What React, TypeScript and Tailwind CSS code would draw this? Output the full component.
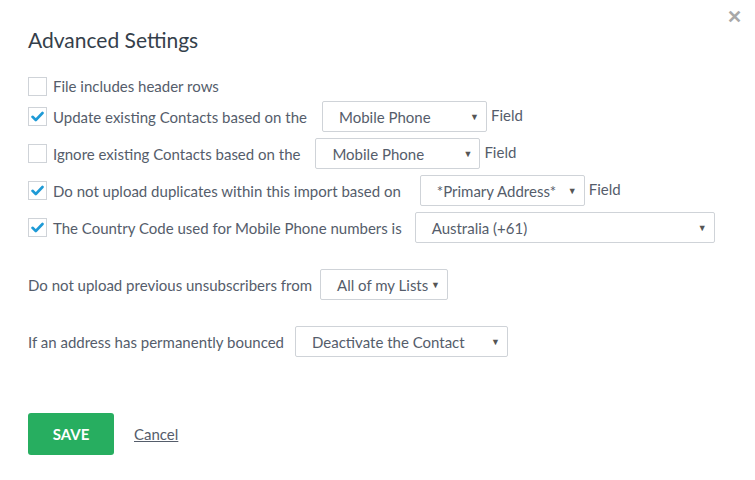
import React from 'react';

function Check({ checked }: { checked: boolean }) {
  return (
    <span className="w-[19px] h-[19px] border border-[#cfd3d8] bg-white flex items-center justify-center shrink-0">
      {checked && (
        <svg width="13" height="11" viewBox="0 0 13 11">
          <path d="M1.5 5.8 L4.8 9 L11.5 2" fill="none" stroke="#1e9ad6" strokeWidth="2.6" strokeLinecap="round" strokeLinejoin="round" />
        </svg>
      )}
    </span>
  );
}

function Select({ value, width }: { value: string; width: string }) {
  return (
    <div className={`${width} h-[31px] border border-[#cfd3d8] rounded-[2px] bg-white flex items-center justify-between pl-4 pr-[7px] shrink-0`}>
      <span>{value}</span>
      <span className="text-[9px] text-[#555]">▼</span>
    </div>
  );
}

function Row({ checked, label, select, width, gap, field }: { checked: boolean; label: string; select?: string; width?: string; gap?: string; field?: boolean }) {
  return (
    <div className={`flex items-center ${select ? 'h-[31px]' : 'h-[18px]'}`}>
      <Check checked={checked} />
      <span className="ml-[6px]">{label}</span>
      {select && (
        <div className={`${gap ?? 'ml-[15px]'} flex items-center`}>
          <Select value={select} width={width ?? 'w-[165px]'} />
          {field && <span className="ml-[4px] -mt-[3px]">Field</span>}
        </div>
      )}
    </div>
  );
}

export default function App() {
  return (
    <div className="relative w-[755px] h-[480px] bg-white text-[#555d6b] text-[15px] leading-[20px] font-['Lato','Noto_Sans',sans-serif] px-[28px] pt-[26px]">
      <span className="absolute right-[13px] top-[6px] text-[#a8a8a8] text-[18px] font-bold">✕</span>
      <h1 className="text-[21px] text-[#353f4b] leading-[28px]">Advanced Settings</h1>
      <div className="mt-[23px] flex flex-col gap-[6px]">
        <Row checked={false} label="File includes header rows" />
        <Row checked label="Update existing Contacts based on the" select="Mobile Phone" field />
        <Row checked={false} label="Ignore existing Contacts based on the" select="Mobile Phone" field />
        <Row checked label="Do not upload duplicates within this import based on" select="*Primary Address*" gap="ml-[19px]" field />
        <Row checked label="The Country Code used for Mobile Phone numbers is" select="Australia (+61)" gap="ml-[13px]" width="w-[300px]" />
      </div>
      <div className="mt-[26px] flex items-center h-[31px]">
        <span>Do not upload previous unsubscribers from</span>
        <div className="ml-[8px]"><Select value="All of my Lists" width="w-[128px]" /></div>
      </div>
      <div className="mt-[26px] flex items-center h-[31px]">
        <span>If an address has permanently bounced</span>
        <div className="ml-[11px]"><Select value="Deactivate the Contact" width="w-[213px]" /></div>
      </div>
      <div className="mt-[56px] flex items-center">
        <button className="w-[86px] h-[42px] bg-[#27ae60] rounded-[3px] text-white font-bold text-[15px]">SAVE</button>
        <a className="ml-[20px] underline text-[#555d6b]">Cancel</a>
      </div>
    </div>
  );
}
